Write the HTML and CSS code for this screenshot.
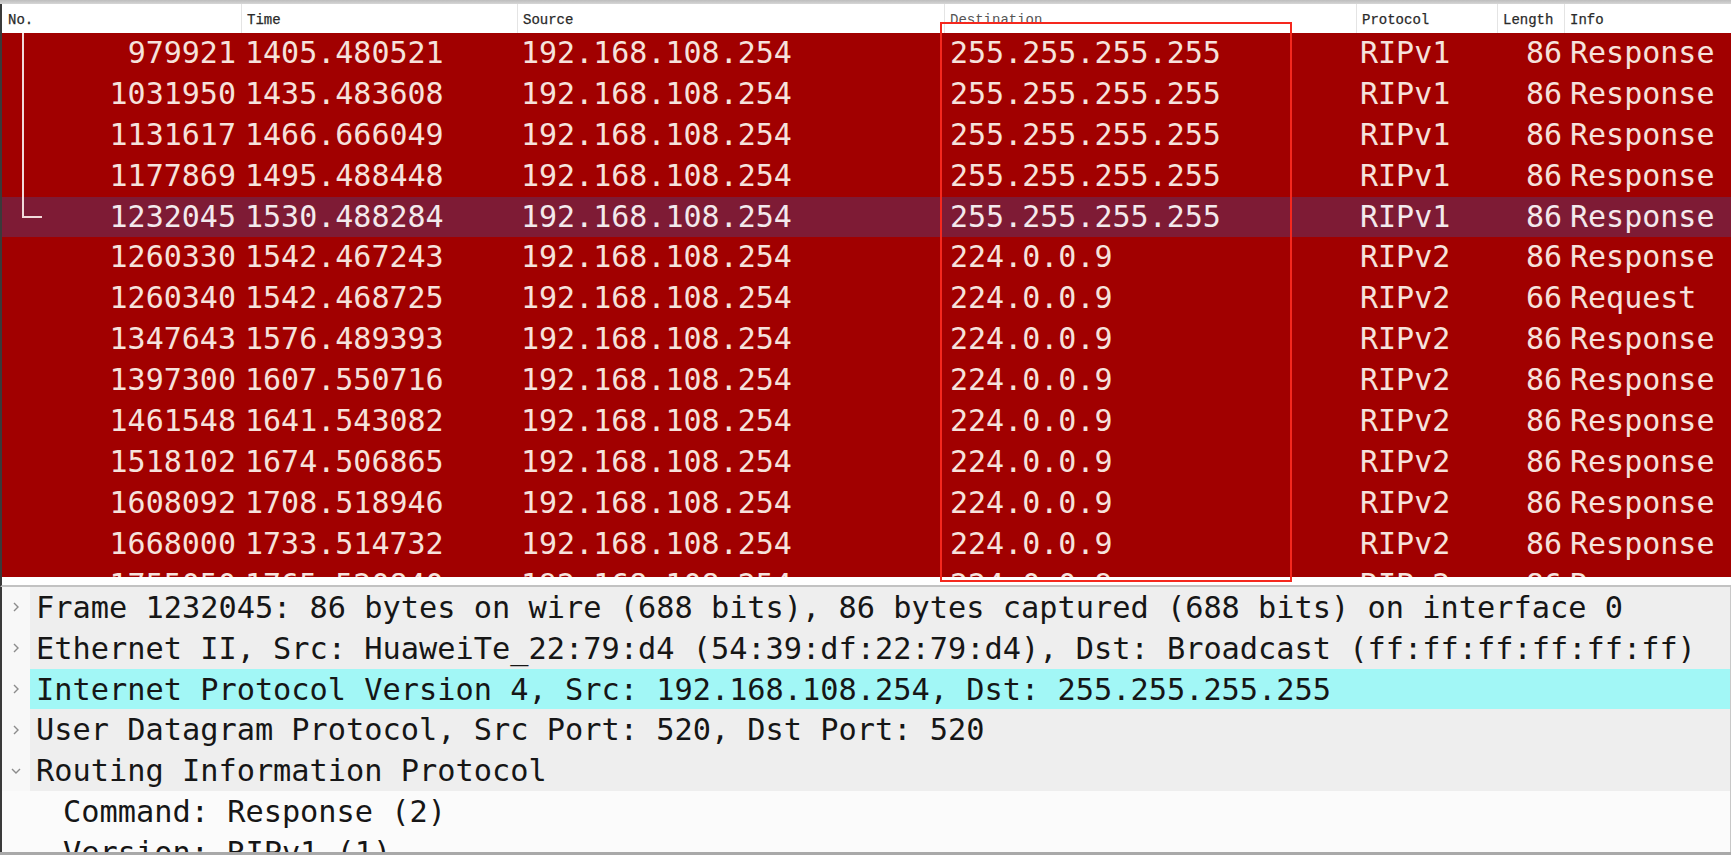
FILE: index.html
```html
<!DOCTYPE html>
<html lang="en">
<head>
<meta charset="utf-8">
<title>Packet list</title>
<link rel="stylesheet" href="styles.css">
</head>
<body>
<div class="screen">
  <div class="topstrip"></div>
  <div class="packet-list">
    <div class="cols header">
      <div class="hcell">No.</div>
      <div class="hcell">Time</div>
      <div class="hcell">Source</div>
      <div class="hcell dest">Destination</div>
      <div class="hcell">Protocol</div>
      <div class="hcell">Length</div>
      <div class="hcell">Info</div>
    </div>
    <div class="rows">
      <div class="cols row rel-mid"><div class="cell num">979921</div><div class="cell">1405.480521</div><div class="cell">192.168.108.254</div><div class="cell">255.255.255.255</div><div class="cell">RIPv1</div><div class="cell num">86</div><div class="cell">Response</div></div>
      <div class="cols row rel-mid"><div class="cell num">1031950</div><div class="cell">1435.483608</div><div class="cell">192.168.108.254</div><div class="cell">255.255.255.255</div><div class="cell">RIPv1</div><div class="cell num">86</div><div class="cell">Response</div></div>
      <div class="cols row rel-mid"><div class="cell num">1131617</div><div class="cell">1466.666049</div><div class="cell">192.168.108.254</div><div class="cell">255.255.255.255</div><div class="cell">RIPv1</div><div class="cell num">86</div><div class="cell">Response</div></div>
      <div class="cols row rel-mid"><div class="cell num">1177869</div><div class="cell">1495.488448</div><div class="cell">192.168.108.254</div><div class="cell">255.255.255.255</div><div class="cell">RIPv1</div><div class="cell num">86</div><div class="cell">Response</div></div>
      <div class="cols row selected rel-end"><div class="cell num">1232045</div><div class="cell">1530.488284</div><div class="cell">192.168.108.254</div><div class="cell">255.255.255.255</div><div class="cell">RIPv1</div><div class="cell num">86</div><div class="cell">Response</div></div>
      <div class="cols row"><div class="cell num">1260330</div><div class="cell">1542.467243</div><div class="cell">192.168.108.254</div><div class="cell">224.0.0.9</div><div class="cell">RIPv2</div><div class="cell num">86</div><div class="cell">Response</div></div>
      <div class="cols row"><div class="cell num">1260340</div><div class="cell">1542.468725</div><div class="cell">192.168.108.254</div><div class="cell">224.0.0.9</div><div class="cell">RIPv2</div><div class="cell num">66</div><div class="cell">Request</div></div>
      <div class="cols row"><div class="cell num">1347643</div><div class="cell">1576.489393</div><div class="cell">192.168.108.254</div><div class="cell">224.0.0.9</div><div class="cell">RIPv2</div><div class="cell num">86</div><div class="cell">Response</div></div>
      <div class="cols row"><div class="cell num">1397300</div><div class="cell">1607.550716</div><div class="cell">192.168.108.254</div><div class="cell">224.0.0.9</div><div class="cell">RIPv2</div><div class="cell num">86</div><div class="cell">Response</div></div>
      <div class="cols row"><div class="cell num">1461548</div><div class="cell">1641.543082</div><div class="cell">192.168.108.254</div><div class="cell">224.0.0.9</div><div class="cell">RIPv2</div><div class="cell num">86</div><div class="cell">Response</div></div>
      <div class="cols row"><div class="cell num">1518102</div><div class="cell">1674.506865</div><div class="cell">192.168.108.254</div><div class="cell">224.0.0.9</div><div class="cell">RIPv2</div><div class="cell num">86</div><div class="cell">Response</div></div>
      <div class="cols row"><div class="cell num">1608092</div><div class="cell">1708.518946</div><div class="cell">192.168.108.254</div><div class="cell">224.0.0.9</div><div class="cell">RIPv2</div><div class="cell num">86</div><div class="cell">Response</div></div>
      <div class="cols row"><div class="cell num">1668000</div><div class="cell">1733.514732</div><div class="cell">192.168.108.254</div><div class="cell">224.0.0.9</div><div class="cell">RIPv2</div><div class="cell num">86</div><div class="cell">Response</div></div>
      <div class="cols row"><div class="cell num">1755050</div><div class="cell">1765.520840</div><div class="cell">192.168.108.254</div><div class="cell">224.0.0.9</div><div class="cell">RIPv2</div><div class="cell num">86</div><div class="cell">Response</div></div>
    </div>
    <div class="highlight-box"></div>
  </div>
  <div class="splitter"></div>
  <div class="details">
    <div class="tree-row top">
      <span class="gutter"><svg class="chev" width="8" height="12" viewBox="0 0 8 12"><polyline points="2,2 6,6 2,10" fill="none" stroke="#8c8c8c" stroke-width="1.4"/></svg></span>
      <span class="label">Frame 1232045: 86 bytes on wire (688 bits), 86 bytes captured (688 bits) on interface 0</span>
    </div>
    <div class="tree-row top">
      <span class="gutter"><svg class="chev" width="8" height="12" viewBox="0 0 8 12"><polyline points="2,2 6,6 2,10" fill="none" stroke="#8c8c8c" stroke-width="1.4"/></svg></span>
      <span class="label">Ethernet II, Src: HuaweiTe_22:79:d4 (54:39:df:22:79:d4), Dst: Broadcast (ff:ff:ff:ff:ff:ff)</span>
    </div>
    <div class="tree-row top current">
      <span class="gutter"><svg class="chev" width="8" height="12" viewBox="0 0 8 12"><polyline points="2,2 6,6 2,10" fill="none" stroke="#8c8c8c" stroke-width="1.4"/></svg></span>
      <span class="label">Internet Protocol Version 4, Src: 192.168.108.254, Dst: 255.255.255.255</span>
    </div>
    <div class="tree-row top">
      <span class="gutter"><svg class="chev" width="8" height="12" viewBox="0 0 8 12"><polyline points="2,2 6,6 2,10" fill="none" stroke="#8c8c8c" stroke-width="1.4"/></svg></span>
      <span class="label">User Datagram Protocol, Src Port: 520, Dst Port: 520</span>
    </div>
    <div class="tree-row top">
      <span class="gutter"><svg class="chev" width="12" height="8" viewBox="0 0 12 8"><polyline points="2,2 6,6 10,2" fill="none" stroke="#8c8c8c" stroke-width="1.4"/></svg></span>
      <span class="label">Routing Information Protocol</span>
    </div>
    <div class="tree-row child">
      <span class="gutter"></span>
      <span class="label">Command: Response (2)</span>
    </div>
    <div class="tree-row child">
      <span class="gutter"></span>
      <span class="label">Version: RIPv1 (1)</span>
    </div>
  </div>
  <div class="bottombar"></div>
</div>
</body>
</html>
```

FILE: styles.css
```css
html, body {
  margin: 0;
  padding: 0;
}

body {
  width: 1731px;
  height: 855px;
  overflow: hidden;
  background: #ffffff;
}

.screen {
  display: flex;
  flex-direction: column;
  width: 1731px;
  height: 855px;
}

.topstrip {
  height: 4px;
  flex: none;
  background: linear-gradient(#bdbdbd, #d6d6d6);
}

.packet-list {
  position: relative;
  flex: none;
  border-left: 2px solid #3a3a3a;
}

.cols {
  display: grid;
  grid-template-columns: 239px 276px 427px 412px 141px 67px 1fr;
}

.header {
  height: 29px;
  background: #ffffff;
  font-family: "Liberation Mono", monospace;
  font-size: 14px;
  color: #2a2a2a;
  box-sizing: border-box;
}

.hcell {
  padding: 8px 0 0 5px;
  border-left: 1px solid #e4e4e4;
  white-space: nowrap;
  overflow: hidden;
  -webkit-text-stroke: 0.25px #2a2a2a;
}

.hcell:first-child {
  border-left: none;
  padding-left: 6px;
}

.hcell.dest {
  color: #555555;
  -webkit-text-stroke: 0;
}

.rows {
  height: 544px;
  overflow: hidden;
  background: #a10000;
}

.row {
  height: 40.9px;
  background: #a10000;
  color: #f6e2dc;
  font-family: "DejaVu Sans Mono", "Liberation Mono", monospace;
  font-size: 30px;
  line-height: 40px;
}

.row.selected {
  background: #7e1b35;
  color: #f3e9ec;
}

.cell {
  padding-left: 4px;
  white-space: nowrap;
  overflow: hidden;
}

.cell:nth-child(4) {
  padding-left: 6px;
}

.cell:nth-child(7) {
  padding-left: 6px;
}

.cell.num {
  text-align: right;
  padding-left: 0;
  padding-right: 5px;
}

.cell.num:nth-child(6) {
  padding-right: 2px;
}

.row .cell:first-child {
  position: relative;
}

.rel-mid .cell:first-child::before {
  content: "";
  position: absolute;
  left: 20px;
  top: 0;
  bottom: 0;
  border-left: 2px solid #f2dada;
}

.rel-end .cell:first-child::before {
  content: "";
  position: absolute;
  left: 20px;
  top: 0;
  width: 18px;
  height: 19px;
  border-left: 2px solid #f2dada;
  border-bottom: 2px solid #f2dada;
}

.highlight-box {
  position: absolute;
  left: 938px;
  top: 18px;
  width: 352px;
  height: 560px;
  border: 2px solid #f5281e;
  box-sizing: border-box;
  pointer-events: none;
}

.splitter {
  height: 10px;
  flex: none;
  box-sizing: border-box;
  background: #ffffff;
  border-left: 2px solid #3a3a3a;
  border-bottom: 2px solid #c2c2c2;
}

.details {
  flex: 1;
  overflow: hidden;
  background: #fbfbfb;
  border-left: 2px solid #3a3a3a;
  border-right: 1px solid #c8c8c8;
  font-family: "DejaVu Sans Mono", "Liberation Mono", monospace;
  font-size: 30.3px;
  color: #161616;
}

.tree-row {
  display: flex;
  height: 40.8px;
  line-height: 42px;
  white-space: nowrap;
}

.gutter {
  flex: none;
  width: 28px;
  display: flex;
  align-items: center;
  justify-content: center;
  background: #f8f8f8;
}

.label {
  flex: 1;
  padding-left: 6px;
  overflow: hidden;
}

.tree-row.top .label {
  background: #eeeeee;
}

.tree-row.current .label {
  background: #a2f7f6;
}

.tree-row.child .gutter {
  background: #fbfbfb;
}

.tree-row.child .label {
  padding-left: 33px;
}

.bottombar {
  height: 3px;
  flex: none;
  background: #a9a9a9;
}
```
